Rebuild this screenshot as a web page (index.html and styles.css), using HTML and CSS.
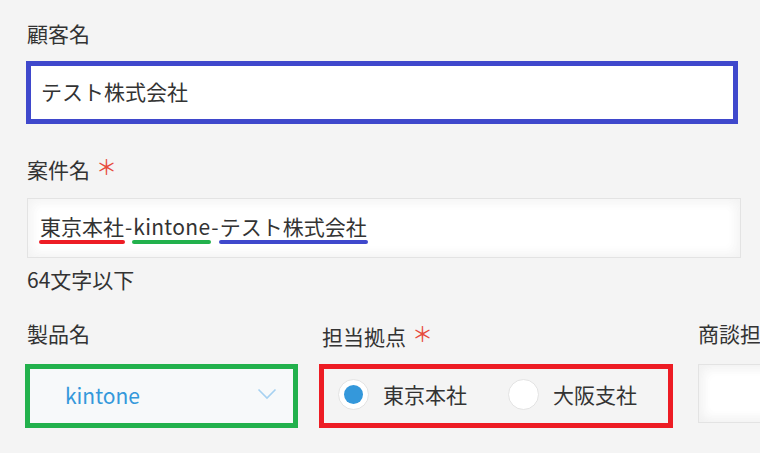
FILE: index.html
```html
<!DOCTYPE html>
<html lang="ja">
<head>
<meta charset="utf-8">
<link rel="stylesheet" href="styles.css">
</head>
<body>
<div class="form">
  <div class="field">
    <div class="label">顧客名</div>
    <div class="mark-blue">テスト株式会社</div>
  </div>
  <div class="field field-title">
    <div class="label">案件名<span class="req">＊</span></div>
    <div class="input">
      <span class="u u-red">東京本社</span><span class="dash">-</span><span class="u u-green">kintone</span><span class="dash">-</span><span class="u u-blue">テスト株式会社</span>
    </div>
    <div class="hint">64文字以下</div>
  </div>
  <div class="row">
    <div class="col col-product">
      <div class="label">製品名</div>
      <div class="mark-green">
        <div class="select">
          <span class="select-value">kintone</span>
          <svg class="chevron" width="20" height="12" viewBox="0 0 20 12"><polyline points="1.5,1.5 10,10 18.5,1.5" fill="none" stroke="#a6d1f1" stroke-width="1.6"/></svg>
        </div>
      </div>
    </div>
    <div class="col col-office">
      <div class="label">担当拠点<span class="req">＊</span></div>
      <div class="mark-red">
        <label class="radio"><span class="dot on"></span><span class="radio-text">東京本社</span></label>
        <label class="radio"><span class="dot"></span><span class="radio-text">大阪支社</span></label>
      </div>
    </div>
    <div class="col col-staff">
      <div class="label">商談担</div>
      <div class="input-box"></div>
    </div>
  </div>
</div>
</body>
</html>
```
FILE: styles.css
```css
* { box-sizing: border-box; }
html, body { margin: 0; padding: 0; }
body {
  background: #f4f4f4;
  font-family: "Noto Sans CJK JP", "Noto Sans", sans-serif;
  font-size: 21px;
  color: #333;
  width: 760px;
  height: 453px;
  overflow: hidden;
}
.form { padding: 18px 0 0 26px; }
.label {
  height: 30px;
  line-height: 30px;
  padding-left: 1px;
  white-space: nowrap;
}
.req {
  color: #e74c3c;
  font-size: 21px;
  margin-left: 6px;
  vertical-align: 3px;
}
.mark-blue {
  margin-top: 13px;
  width: 712px;
  height: 63px;
  border: 5px solid #3f48cc;
  background: #fff;
  display: flex;
  align-items: center;
  padding: 0 0 4px 10px;
  line-height: 30px;
}
.field-title { margin-top: 27px; }
.input {
  margin-top: 17px;
  margin-left: 1px;
  width: 714px;
  height: 60px;
  border: 1px solid #e3e3e3;
  background: #fff;
  box-shadow: inset 1px 1px 14px #f3f3f3, inset -1px -1px 14px #f3f3f3;
  display: flex;
  align-items: center;
  padding: 0 0 5px 12px;
  white-space: pre;
}
.dash { padding: 0 1px; }
.u {
  position: relative;
  display: inline-block;
  line-height: 30px;
}
.u-green { letter-spacing: 0.3px; }
.u::after {
  content: "";
  position: absolute;
  left: -1px;
  right: -1px;
  bottom: -3px;
  height: 4px;
  border-radius: 2px;
}
.u-red::after { background: #ed1c24; }
.u-green::after { background: #22b14c; }
.u-blue::after { background: #3f48cc; }
.hint {
  margin-top: 6px;
  height: 30px;
  line-height: 30px;
  padding-left: 1px;
}
.row {
  margin-top: 24px;
  display: flex;
  align-items: flex-start;
}
.col { display: flex; flex-direction: column; gap: 16px; }
.col-product { margin-left: -1px; }
.col-product .label { padding-left: 2px; }
.col-office { margin-left: 21px; }
.col-office .label { padding-left: 3px; }
.col-staff { margin-left: 25px; }
.col-staff .label { padding-left: 0; }
.mark-green {
  width: 273px;
  height: 64px;
  border: 5px solid #22b14c;
  background: #f7f9fa;
}
.select {
  height: 100%;
  display: flex;
  align-items: center;
  justify-content: space-between;
  padding: 0 16px 2px 35px;
}
.select-value { color: #3498db; line-height: 30px; }
.chevron { display: block; margin-top: -2px; }
.mark-red {
  width: 354px;
  height: 64px;
  border: 5px solid #ed1c24;
  display: flex;
  align-items: center;
  padding: 0 0 3px 14px;
}
.radio {
  display: flex;
  align-items: center;
  gap: 14px;
  line-height: 30px;
}
.radio + .radio { margin-left: 41px; }
.dot {
  width: 31px;
  height: 31px;
  border-radius: 50%;
  background: #fff;
  border: 1px solid #e3e3e3;
  display: flex;
  align-items: center;
  justify-content: center;
}
.dot.on::before {
  content: "";
  width: 19px;
  height: 19px;
  border-radius: 50%;
  background: #3498db;
}
.radio-text { padding-bottom: 2px; }
.input-box {
  width: 120px;
  height: 59px;
  border: 1px solid #e3e3e3;
  background: #fff;
  box-shadow: inset 1px 1px 14px #f0f0f0, inset -1px -1px 14px #f0f0f0;
}
```
